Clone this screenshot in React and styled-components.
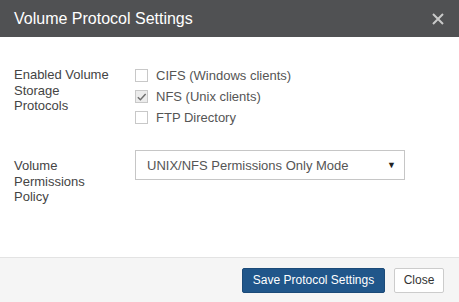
import React from 'react'
import styled, { createGlobalStyle } from 'styled-components'

const GlobalStyle = createGlobalStyle`
  html, body {
    margin: 0;
    padding: 0;
    background: #ffffff;
  }
  body {
    font-family: "Liberation Sans", Arial, sans-serif;
  }
`

const protocols = [
  { label: 'CIFS (Windows clients)', checked: false },
  { label: 'NFS (Unix clients)', checked: true },
  { label: 'FTP Directory', checked: false },
]

const CheckBox = ({ checked }) => (
  <Box checked={checked}>
    {checked && (
      <svg width="12" height="12" viewBox="0 0 12 12">
        <path d="M2 6.2 L4.8 9 L10.5 2.8" fill="none" stroke="#6f6f6f" strokeWidth="1.6" />
      </svg>
    )}
  </Box>
)

const App = () => {
  return (
    <>
      <GlobalStyle />
      <Dialog>
        <Header>
          <Title>Volume Protocol Settings</Title>
          <CloseX>
            <svg width="12" height="12" viewBox="0 0 12 12">
              <path d="M1 1 L11 11 M11 1 L1 11" stroke="#c9c9c9" strokeWidth="2" />
            </svg>
          </CloseX>
        </Header>
        <Body>
          <FormRow>
            <Label>Enabled Volume Storage Protocols</Label>
            <CheckList>
              {protocols.map((p) => (
                <CheckRow key={p.label}>
                  <CheckBox checked={p.checked} />
                  <CheckText>{p.label}</CheckText>
                </CheckRow>
              ))}
            </CheckList>
          </FormRow>
          <FormRow>
            <Label $top={8}>Volume Permissions Policy</Label>
            <Select>
              <span>UNIX/NFS Permissions Only Mode</span>
              <Caret>▼</Caret>
            </Select>
          </FormRow>
        </Body>
        <Footer>
          <PrimaryButton>Save Protocol Settings</PrimaryButton>
          <DefaultButton>Close</DefaultButton>
        </Footer>
      </Dialog>
    </>
  )
}

export default App

const Dialog = styled.div`
  width: 459px;
  height: 302px;
  display: flex;
  flex-direction: column;
  background: #ffffff;
`
const Header = styled.div`
  height: 37px;
  background: #505153;
  display: flex;
  align-items: center;
  justify-content: space-between;
  padding: 0 15px 0 14px;
  box-sizing: border-box;
`
const Title = styled.h4`
  margin: 0;
  font-size: 16px;
  font-weight: normal;
  color: #ffffff;
`
const CloseX = styled.span`
  display: flex;
  align-items: center;
`
const Body = styled.div`
  flex: 1;
  padding: 23px 14px 0 14px;
  display: flex;
  flex-direction: column;
  gap: 22px;
`
const FormRow = styled.div`
  display: flex;
  align-items: flex-start;
`
const Label = styled.div`
  width: 99px;
  padding-top: ${(p) => p.$top ?? 7}px;
  margin-right: 22px;
  font-size: 13px;
  line-height: 15.5px;
  color: #444444;
`
const CheckList = styled.div`
  padding-top: 5px;
  display: flex;
  flex-direction: column;
`
const CheckRow = styled.label`
  height: 21px;
  display: flex;
  align-items: center;
  gap: 8px;
`
const Box = styled.span`
  width: 11px;
  height: 11px;
  border: 1px solid #c8c8c8;
  background: ${(p) => (p.checked ? '#ececec' : '#ffffff')};
  display: flex;
  align-items: center;
  justify-content: center;
`
const CheckText = styled.span`
  font-size: 13px;
  color: #555555;
`
const Select = styled.div`
  width: 270px;
  height: 30px;
  box-sizing: border-box;
  border: 1px solid #c6c6c6;
  display: flex;
  align-items: center;
  justify-content: space-between;
  padding: 0 8px 0 11px;
  font-size: 13px;
  color: #555555;
`
const Caret = styled.span`
  font-size: 9px;
  color: #222222;
`
const Footer = styled.div`
  height: 45px;
  box-sizing: border-box;
  border-top: 1px solid #e3e3e3;
  background: #f5f5f5;
  display: flex;
  align-items: center;
  justify-content: flex-end;
  gap: 9px;
  padding: 0 15px 0 0;
`
const ButtonBase = styled.button`
  height: 25px;
  box-sizing: border-box;
  border-radius: 2px;
  font-family: "Liberation Sans", Arial, sans-serif;
  font-size: 12px;
  padding: 0;
  white-space: nowrap;
  cursor: pointer;
`
const PrimaryButton = styled(ButtonBase)`
  width: 143px;
  background: #20568a;
  border: 1px solid #1b4a78;
  color: #ffffff;
`
const DefaultButton = styled(ButtonBase)`
  width: 50px;
  background: #ffffff;
  border: 1px solid #cccccc;
  color: #333333;
`
